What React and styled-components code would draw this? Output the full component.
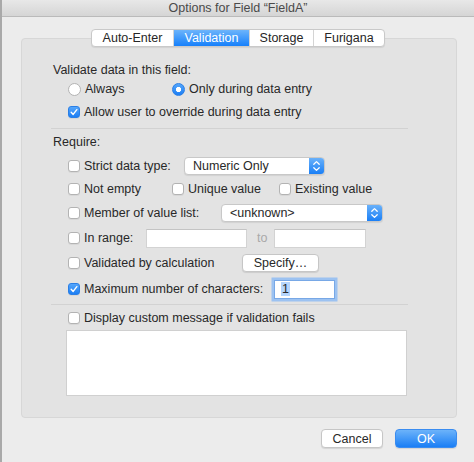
import React from 'react';
import styled, { createGlobalStyle } from 'styled-components';

const tabs = [
  { title: 'Auto-Enter', width: 81 },
  { title: 'Validation', width: 75, active: true },
  { title: 'Storage', width: 63 },
  { title: 'Furigana', width: 70 },
];

const CheckMark = () => (
  <svg width="12" height="12" viewBox="0 0 12 12">
    <path d="M2.6 6.4 L5 8.9 L9.4 3.2" fill="none" stroke="#fff" strokeWidth="1.7" strokeLinecap="round" strokeLinejoin="round" />
  </svg>
);

const Chevrons = () => (
  <svg width="15" height="18" viewBox="0 0 15 18">
    <path d="M4.8 7.2 L7.5 4.6 L10.2 7.2" fill="none" stroke="#fff" strokeWidth="1.3" strokeLinecap="round" strokeLinejoin="round" />
    <path d="M4.8 10.8 L7.5 13.4 L10.2 10.8" fill="none" stroke="#fff" strokeWidth="1.3" strokeLinecap="round" strokeLinejoin="round" />
  </svg>
);

const Check = ({ checked, label, width }) => (
  <Option $w={width}>
    <Box $checked={checked}>{checked && <CheckMark />}</Box>
    <span>{label}</span>
  </Option>
);

const Radio = ({ checked, label, width }) => (
  <Option $w={width}>
    <Circle $checked={checked} />
    <span>{label}</span>
  </Option>
);

const Popup = ({ value, width }) => (
  <Select $w={width}>
    <SelectText>{value}</SelectText>
    <SelectCap>
      <Chevrons />
    </SelectCap>
  </Select>
);

export default function App() {
  return (
    <>
      <GlobalStyle />
      <Window>
        <TitleBar>Options for Field “FieldA”</TitleBar>
        <TabBar>
          {tabs.map((tab) => (
            <Tab key={tab.title} $w={tab.width} $active={tab.active}>
              {tab.title}
            </Tab>
          ))}
        </TabBar>
        <Panel>
          <Heading>Validate data in this field:</Heading>
          <Row>
            <Radio label="Always" width={104} />
            <Radio label="Only during data entry" checked />
          </Row>
          <Row $mt={3}>
            <Check label="Allow user to override during data entry" checked />
          </Row>
          <Separator $mt={6} />
          <Heading $mt={4}>Require:</Heading>
          <Row $mt={5}>
            <Check label="Strict data type:" width={116} />
            <Popup value="Numeric Only" width={141} />
          </Row>
          <Row $mt={3}>
            <Check label="Not empty" width={104} />
            <Check label="Unique value" width={107} />
            <Check label="Existing value" />
          </Row>
          <Row $mt={4}>
            <Check label="Member of value list:" width={153} />
            <Popup value="<unknown>" width={162} />
          </Row>
          <Row $mt={5}>
            <Check label="In range:" width={78} />
            <Field $w={101} />
            <ToLabel>to</ToLabel>
            <Field $w={92} />
          </Row>
          <Row $mt={5}>
            <Check label="Validated by calculation" width={174} />
            <PushButton $w={77}>Specify…</PushButton>
          </Row>
          <Row $mt={6}>
            <Check label="Maximum number of characters:" width={206} checked />
            <Field $w={61} $focused>
              <Selected>1</Selected>
            </Field>
          </Row>
          <Separator $mt={5} />
          <Row $mt={3}>
            <Check label="Display custom message if validation fails" />
          </Row>
          <MessageBox />
        </Panel>
        <Footer>
          <PushButton $w={62} $h={19}>Cancel</PushButton>
          <PushButton $w={62} $h={19} $primary>OK</PushButton>
        </Footer>
      </Window>
    </>
  );
}

const GlobalStyle = createGlobalStyle`
  html, body {
    margin: 0;
    padding: 0;
    background: #ececec;
  }
  body {
    font-family: "Liberation Sans", Arial, sans-serif;
  }
`;
const Window = styled.div`
  width: 474px;
  height: 462px;
  box-sizing: border-box;
  display: flex;
  flex-direction: column;
  overflow: hidden;
  background: #ececec;
  border-left: 2px solid #a9a9a9;
  color: #282828;
  font-size: 12.5px;
`;
const TitleBar = styled.div`
  height: 16px;
  display: flex;
  align-items: center;
  justify-content: center;
  background: linear-gradient(#e8e8e8, #d5d5d5);
  border-bottom: 1px solid #bababa;
  font-size: 12.5px;
  color: #4a4a4a;
`;
const TabBar = styled.div`
  position: relative;
  z-index: 1;
  align-self: center;
  display: flex;
  height: 18px;
  box-sizing: border-box;
  margin: 12px 0 -9px;
  background: #fff;
  border: 1px solid #c9c9c9;
  border-radius: 4px;
  box-shadow: 0 1px 1px rgba(0, 0, 0, 0.08);
  overflow: hidden;
`;
const Tab = styled.div`
  width: ${({ $w }) => $w}px;
  display: flex;
  align-items: center;
  justify-content: center;
  color: ${({ $active }) => ($active ? '#fff' : '#262626')};
  background: ${({ $active }) => ($active ? 'linear-gradient(#6cb4fb, #1680fb)' : 'transparent')};
  & + & {
    border-left: 1px solid #d4d4d4;
  }
`;
const Panel = styled.div`
  margin: 0 17px 0 19px;
  padding: 22px 0 21px 31px;
  display: flex;
  flex-direction: column;
  background: #e3e3e3;
  border: 1px solid #d7d7d7;
  border-radius: 4px;
`;
const Heading = styled.div`
  height: 18px;
  line-height: 18px;
  margin-top: ${({ $mt }) => $mt || 0}px;
`;
const Row = styled.div`
  height: 20px;
  display: flex;
  align-items: center;
  padding-left: 15px;
  margin-top: ${({ $mt }) => $mt || 0}px;
`;
const Option = styled.label`
  display: flex;
  align-items: center;
  gap: 4px;
  flex: none;
  width: ${({ $w }) => ($w ? `${$w}px` : 'auto')};
  white-space: nowrap;
`;
const Box = styled.span`
  width: 12px;
  height: 12px;
  box-sizing: border-box;
  display: flex;
  align-items: center;
  justify-content: center;
  border-radius: 3px;
  border: 1px solid ${({ $checked }) => ($checked ? '#2a7fe6' : '#b3b3b3')};
  background: ${({ $checked }) => ($checked ? 'linear-gradient(#55a6fb, #1c7ef4)' : '#fff')};
  box-shadow: 0 1px 0 rgba(0, 0, 0, 0.05);
  & svg {
    margin-top: 0.5px;
  }
`;
const Circle = styled.span`
  width: 13px;
  height: 13px;
  box-sizing: border-box;
  border-radius: 50%;
  border: 1px solid ${({ $checked }) => ($checked ? '#2a7fe6' : '#b3b3b3')};
  background: ${({ $checked }) =>
    $checked ? 'radial-gradient(circle, #fff 0 2.4px, transparent 2.9px), linear-gradient(#55a6fb, #1c7ef4)' : '#fff'};
`;
const Separator = styled.div`
  width: 357px;
  height: 1px;
  margin: ${({ $mt }) => $mt}px 0 0 -2px;
  background: #d2d2d2;
`;
const Select = styled.div`
  width: ${({ $w }) => $w}px;
  height: 18px;
  box-sizing: border-box;
  display: flex;
  background: #fff;
  border: 1px solid #c8c8c8;
  border-radius: 4px;
  box-shadow: 0 1px 1px rgba(0, 0, 0, 0.08);
  overflow: hidden;
`;
const SelectText = styled.div`
  flex: 1;
  display: flex;
  align-items: center;
  padding-left: 8px;
`;
const SelectCap = styled.div`
  width: 15px;
  display: flex;
  align-items: center;
  justify-content: center;
  background: linear-gradient(#69b1fa, #1a7ff6);
`;
const Field = styled.div`
  width: ${({ $w }) => $w}px;
  height: 19px;
  box-sizing: border-box;
  display: flex;
  align-items: center;
  padding-left: 6px;
  background: #fff;
  border: 1px solid ${({ $focused }) => ($focused ? '#78a8e6' : '#d3d3d3')};
  border-top-color: ${({ $focused }) => ($focused ? '#78a8e6' : '#c4c4c4')};
  box-shadow: ${({ $focused }) => ($focused ? '0 0 0 2.5px #9cc2f1' : 'none')};
`;
const Selected = styled.span`
  background: #b5d5fd;
  padding: 0 1px;
  line-height: 14px;
`;
const ToLabel = styled.span`
  margin: 0 7px 0 10px;
  color: #a9a9a9;
`;
const PushButton = styled.div`
  width: ${({ $w }) => $w}px;
  height: ${({ $h }) => $h || 18}px;
  box-sizing: border-box;
  display: flex;
  align-items: center;
  justify-content: center;
  border-radius: 4px;
  color: ${({ $primary }) => ($primary ? '#fff' : '#282828')};
  background: ${({ $primary }) => ($primary ? 'linear-gradient(#6cb3fa, #1a7ef5)' : '#fff')};
  border: 1px solid ${({ $primary }) => ($primary ? '#3a8cf0' : '#c6c6c6')};
  box-shadow: 0 1px 1px rgba(0, 0, 0, 0.1);
`;
const MessageBox = styled.div`
  width: 341px;
  height: 66px;
  box-sizing: border-box;
  margin: 2px 0 0 13px;
  background: #fff;
  border: 1px solid #d0d0d0;
`;
const Footer = styled.div`
  display: flex;
  justify-content: flex-end;
  gap: 12px;
  margin-top: 11px;
  padding-right: 17px;
`;
